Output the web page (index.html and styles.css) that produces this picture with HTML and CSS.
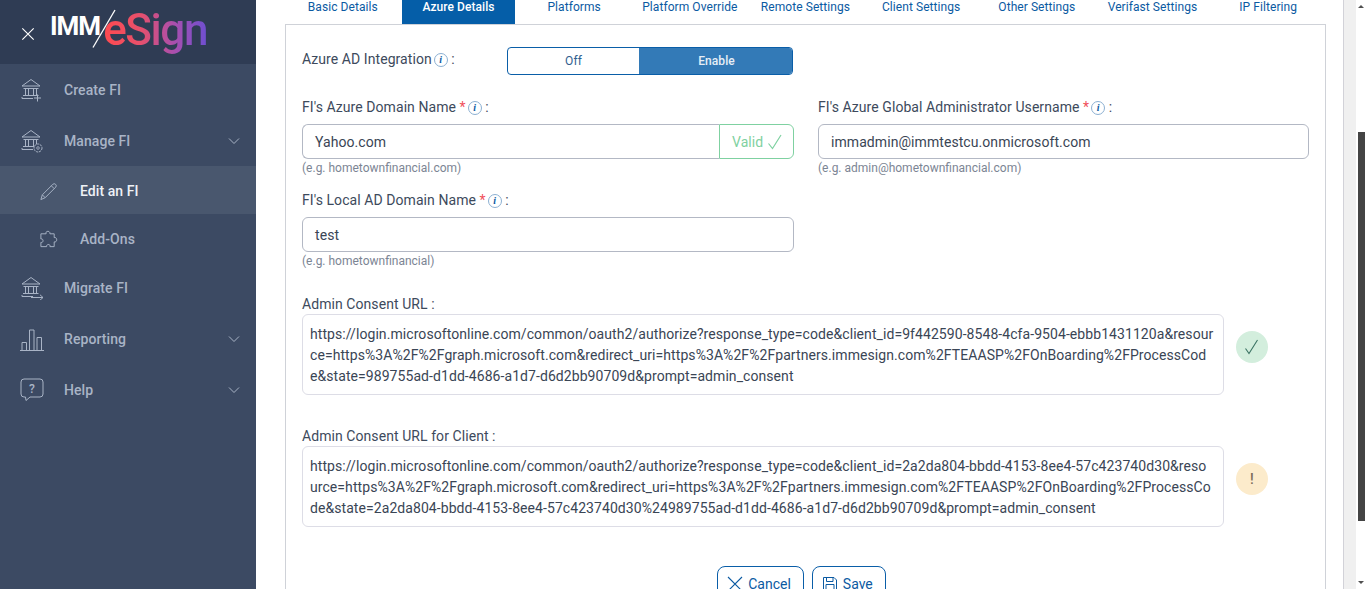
FILE: index.html
```html
<!DOCTYPE html>
<html lang="en">
<head>
<meta charset="utf-8">
<title>Azure Details</title>
<link rel="stylesheet" href="styles.css">
</head>
<body>
<svg class="defs" width="0" height="0" aria-hidden="true">
  <symbol id="bank" viewBox="0 0 24 24">
    <path d="M2 8 11 1.500l9 6.500ZM3.500 10.500h15M5.500 10.500v7M8.500 10.500v7M13.500 10.500v7M16.500 10.500v7M3 17.500h15.500M2 20.500h11M2 20.500v-1.500" fill="none" stroke="currentColor" stroke-width="1"/>
  </symbol>
</svg>
<aside class="sidebar">
  <header class="brand">
    <svg class="close" viewBox="0 0 16 16"><path d="M1.500 1.500l13 13M14.500 1.500l-13 13" stroke="#fff" stroke-width="1.300" fill="none"/></svg>
    <div class="logo"><span class="logo-imm">IMM</span><svg class="logo-slash" viewBox="0 0 24 40"><path d="M1 38.500 23 1" stroke="#fff" stroke-width="1.300"/></svg><span class="logo-sign">eSign</span></div>
  </header>
  <nav>
    <a class="nav-row"><svg class="nav-icon" viewBox="0 0 24 24"><use href="#bank"/><path d="M17.500 16.500v7M14 20h7" stroke="currentColor" fill="none"/></svg><span>Create FI</span></a>
    <a class="nav-row"><svg class="nav-icon" viewBox="0 0 24 24"><use href="#bank"/><circle cx="18" cy="19" r="4" fill="#3c4a63" stroke="currentColor" stroke-dasharray="2.200 .7"/><circle cx="18" cy="19" r="1.300" fill="none" stroke="currentColor" stroke-width=".8"/></svg><span>Manage FI</span><svg class="chev" viewBox="0 0 12 8"><path d="M1 1.500 6 6.500 11 1.500" fill="none" stroke="currentColor"/></svg></a>
    <a class="sub-row active"><svg class="sub-icon" viewBox="0 0 20 20"><path d="M2 18.500 3.500 13.500 14.500 2.500a1.700 1.700 0 0 1 3 3L6.500 16.500ZM3.500 13.500l3 3M13 4l3 3" fill="none" stroke="currentColor"/></svg><span>Edit an FI</span></a>
    <a class="sub-row"><svg class="sub-icon" viewBox="0 0 20 20"><path d="M7.500 4C6 1 12 0 11.500 4H16V8C19.500 7 19.500 13.500 16 12.500V17.500H11.500C12.500 14.500 7.500 14.500 8 17.500H2V13C5 14 5 8.500 2 9.500V4Z" fill="none" stroke="currentColor"/></svg><span>Add-Ons</span></a>
    <a class="nav-row"><svg class="nav-icon" viewBox="0 0 24 24"><use href="#bank"/><path d="M11 21.500h12M20 18.800l3 2.700-3 2.700" stroke="currentColor" fill="none"/></svg><span>Migrate FI</span></a>
    <a class="nav-row"><svg class="nav-icon" viewBox="0 0 24 24"><path d="M0 23.500h24M2 23V15.500h4.500V23M9.500 23V3h4.500v20M17 23V10.500h4.500V23" fill="none" stroke="currentColor"/></svg><span>Reporting</span><svg class="chev" viewBox="0 0 12 8"><path d="M1 1.500 6 6.500 11 1.500" fill="none" stroke="currentColor"/></svg></a>
    <a class="nav-row"><svg class="nav-icon" viewBox="0 0 24 24"><path d="M4 1h16a3 3 0 0 1 3 3v12a3 3 0 0 1-3 3H10l-4 3.500-.5-3.500H4a3 3 0 0 1-3-3V4a3 3 0 0 1 3-3Z" fill="none" stroke="currentColor"/><text x="12" y="15" text-anchor="middle" class="help-q">?</text></svg><span>Help</span><svg class="chev" viewBox="0 0 12 8"><path d="M1 1.500 6 6.500 11 1.500" fill="none" stroke="currentColor"/></svg></a>
  </nav>
</aside>

<main class="main">
  <div class="content">
    <div class="tabs">
      <a class="tab">Basic Details</a>
      <a class="tab active">Azure Details</a>
      <a class="tab">Platforms</a>
      <a class="tab">Platform Override</a>
      <a class="tab">Remote Settings</a>
      <a class="tab">Client Settings</a>
      <a class="tab">Other Settings</a>
      <a class="tab">Verifast Settings</a>
      <a class="tab">IP Filtering</a>
    </div>
    <section class="panel">
      <div class="toggle-row">
        <label class="label toggle-label">Azure AD Integration<i class="info">i</i> :</label>
        <div class="toggle"><span class="opt">Off</span><span class="opt on">Enable</span></div>
      </div>
      <div class="grid">
        <div class="field">
          <label class="label">FI's Azure Domain Name <em>*</em><i class="info">i</i> :</label>
          <div class="input-group">
            <div class="input joined">Yahoo.com</div>
            <div class="valid">Valid <svg viewBox="0 0 16 16"><path d="M1.500 9.500 5.500 14.500 14 1" fill="none" stroke="currentColor" stroke-width="1.200"/></svg></div>
          </div>
          <p class="hint">(e.g. hometownfinancial.com)</p>
        </div>
        <div class="field">
          <label class="label">FI's Azure Global Administrator Username <em>*</em><i class="info">i</i> :</label>
          <div class="input">immadmin@immtestcu.onmicrosoft.com</div>
          <p class="hint">(e.g. admin@hometownfinancial.com)</p>
        </div>
        <div class="field">
          <label class="label">FI's Local AD Domain Name <em>*</em><i class="info">i</i> :</label>
          <div class="input">test</div>
          <p class="hint">(e.g. hometownfinancial)</p>
        </div>
      </div>

      <label class="label url-label first">Admin Consent URL :</label>
      <div class="url-row">
        <div class="url-box">https://login.microsoftonline.com/common/oauth2/authorize?response_type=code&amp;client_id=9f442590-8548-4cfa-9504-ebbb1431120a&amp;resour<br>ce=https%3A%2F%2Fgraph.microsoft.com&amp;redirect_uri=https%3A%2F%2Fpartners.immesign.com%2FTEAASP%2FOnBoarding%2FProcessCod<br>e&amp;state=989755ad-d1dd-4686-a1d7-d6d2bb90709d&amp;prompt=admin_consent</div>
        <div class="status ok"><svg viewBox="0 0 16 16"><path d="M1.500 9.500 5 14.500 13.500 1" fill="none" stroke="currentColor" stroke-width="1.100"/></svg></div>
      </div>

      <label class="label url-label second">Admin Consent URL for Client :</label>
      <div class="url-row">
        <div class="url-box">https://login.microsoftonline.com/common/oauth2/authorize?response_type=code&amp;client_id=2a2da804-bbdd-4153-8ee4-57c423740d30&amp;reso<br>urce=https%3A%2F%2Fgraph.microsoft.com&amp;redirect_uri=https%3A%2F%2Fpartners.immesign.com%2FTEAASP%2FOnBoarding%2FProcessCo<br>de&amp;state=2a2da804-bbdd-4153-8ee4-57c423740d30%24989755ad-d1dd-4686-a1d7-d6d2bb90709d&amp;prompt=admin_consent</div>
        <div class="status warn">!</div>
      </div>

      <div class="actions">
        <button class="btn"><svg viewBox="0 0 16 16"><path d="M1 1l14 14M15 1 1 15" fill="none" stroke="currentColor" stroke-width="1.100"/></svg>Cancel</button>
        <button class="btn"><svg viewBox="0 0 16 16"><path d="M1.500 1.500h10.500l2.500 2.500v10.500h-13ZM4.500 1.500v4h6.500v-4M4 14.500v-6h8v6" fill="none" stroke="currentColor"/></svg>Save</button>
      </div>
    </section>
  </div>
  <div class="gutter"></div>
  <div class="scrollbar">
    <span class="arrow up"></span>
    <span class="thumb"></span>
    <span class="arrow down"></span>
  </div>
</main>
</body>
</html>
```

FILE: styles.css
```css
* { box-sizing: border-box; }
html, body { height: 100%; margin: 0; overflow: hidden; }
body { display: flex; font-family: Roboto, "Liberation Sans", sans-serif; font-size: 14px; letter-spacing: .07px; color: #3d4a5c; background: #fff; }
.defs { position: absolute; }

/* sidebar */
.sidebar { flex: 0 0 256px; height: 589px; background: #3c4a63; color: #a9b4c6; }
.brand { height: 64px; background: #2f3c54; display: flex; align-items: center; padding-left: 21px; }
.close { width: 14px; height: 14px; margin-right: 15px; margin-top: 3px; }
.logo { display: flex; align-items: flex-start; height: 46px; position: relative; }
.logo-imm { font-weight: 700; font-size: 26px; line-height: 26px; color: #fff; letter-spacing: -1px; margin-top: 4px; }
.logo-slash { position: absolute; left: 42px; top: 0; width: 24px; height: 40px; }
.logo-sign { font-weight: 500; font-size: 44px; line-height: 52px; letter-spacing: -1.400px; margin-left: 3px; margin-top: -5px; background: linear-gradient(90deg, #ff4a4f 0%, #e8506b 35%, #a64fb0 70%, #6f4fd0 100%); -webkit-background-clip: text; background-clip: text; color: transparent; }
.nav-row, .sub-row { display: flex; align-items: center; font-weight: 500; }
.nav-row { height: 51px; padding: 0 15px 0 20px; }
.nav-row .nav-icon { width: 24px; height: 24px; margin-right: 20px; flex: none; }
.nav-row span { flex: 1; }
.chev { width: 12px; height: 8px; flex: none; margin-right: 1px; }
.sub-row { height: 48px; padding: 2px 0 0 39px; }
.sub-row .sub-icon { width: 19px; height: 19px; margin-right: 22px; flex: none; }
.sub-row.active { background: #49576e; color: #eef1f6; }
.sub-row.active .sub-icon { color: #a9b4c6; }
.help-q { font-size: 12px; font-weight: 500; fill: currentColor; }

/* main */
.main { flex: 1; display: flex; height: 589px; overflow: hidden; }
.content { width: 1087px; flex: none; padding-left: 29px; padding-right: 17px; }
.tabs { display: grid; grid-template-columns: repeat(9, 1fr); height: 24px; }
.tab { margin: 0 1.500px; text-align: center; font-size: 12px; letter-spacing: .07px; line-height: 14px; color: #0b5aa2; height: 24px; }
.tab.active { background: #055ea8; color: #fff; font-weight: 500; }
.panel { border: 1px solid #cfd2d8; border-bottom: 0; padding: 22px 16px 0; height: 600px; }
.toggle-row { display: flex; align-items: center; height: 28px; }
.label { display: block; line-height: 20px; color: #3d4a5c; }
.label em { color: #f0505a; font-style: normal; }
.toggle-label { width: 205px; flex: none; margin-top: -4px; }
.info { display: inline-flex; align-items: center; justify-content: center; width: 14px; height: 14px; margin-left: 2px; border: 1px solid #8cb0d2; border-radius: 50%; font-family: "Liberation Serif", serif; font-size: 10px; font-weight: 700; color: #0b5aa2; vertical-align: 1px; }
.toggle { display: flex; width: 286px; height: 28px; border: 1px solid #0a5ea8; border-radius: 4px; overflow: hidden; font-size: 12px; }
.opt { display: flex; align-items: center; justify-content: center; width: 131px; color: #2f5f8f; }
.opt.on { flex: 1; padding-left: 2px; background: #337ab7; color: #e6eef6; font-weight: 500; }
.grid { display: grid; grid-template-columns: 492px 491px; column-gap: 24px; row-gap: 14px; margin-top: 22px; }
.field { min-width: 0; }
.field .label { margin-bottom: 7px; }
.input { display: flex; align-items: center; height: 35px; padding: 0 12px; border: 1px solid #b3b8c4; border-radius: 6px; color: #3a4555; }
.input-group { display: flex; }
.input.joined { flex: 1; border-radius: 6px 0 0 6px; border-right: 0; }
.valid { display: flex; align-items: center; gap: 4px; width: 75px; height: 35px; padding-left: 12px; border: 1px solid #7fd1a1; border-radius: 0 6px 6px 0; color: #7fd1a1; }
.valid svg { width: 16px; height: 16px; }
.hint { margin: 1px 0 0; font-size: 12px; letter-spacing: 0; line-height: 16px; color: #7c8594; }
.url-label.first { margin: 25px 0 0; }
.url-label.second { margin: 31px 0 0; }
.url-row { display: flex; align-items: flex-start; }
.url-box { width: 922px; height: 81px; flex: none; padding: 9px 7px; border: 1px solid #dddde6; border-radius: 6px; line-height: 21px; white-space: nowrap; color: #3a4555; }
.status { display: flex; align-items: center; justify-content: center; width: 32px; height: 32px; margin: 17px 0 0 12px; border-radius: 50%; }
.status svg { width: 16px; height: 16px; }
.status.ok { background: #d3eedd; color: #3c7464; }
.status.warn { background: #fcebcb; color: #7a6a58; font-weight: 500; }
.actions { display: flex; justify-content: center; gap: 8px; margin-top: 39px; padding-right: 8px; }
.btn { display: inline-flex; align-items: center; gap: 5px; height: 35px; padding: 0 12px 0 9px; border: 1px solid #0a5ea8; border-radius: 8px; background: #fff; color: #0b5aa2; font: inherit; }
.btn svg { width: 16px; height: 16px; }

/* scroll gutter */
.gutter { width: 13px; flex: none; background: #f0f0f0; border-left: 1px solid #d2d2d8; }
.scrollbar { flex: 1; display: flex; flex-direction: column; align-items: center; position: relative; background: #fff; }
.thumb { display: block; width: 7px; height: 389px; margin-top: 132px; background: #444; }
.arrow { position: absolute; left: 2px; border-left: 3px solid transparent; border-right: 3px solid transparent; }
.arrow.up { top: 5px; border-bottom: 3px solid #505050; }
.arrow.down { bottom: 5px; border-top: 3px solid #505050; }
```
